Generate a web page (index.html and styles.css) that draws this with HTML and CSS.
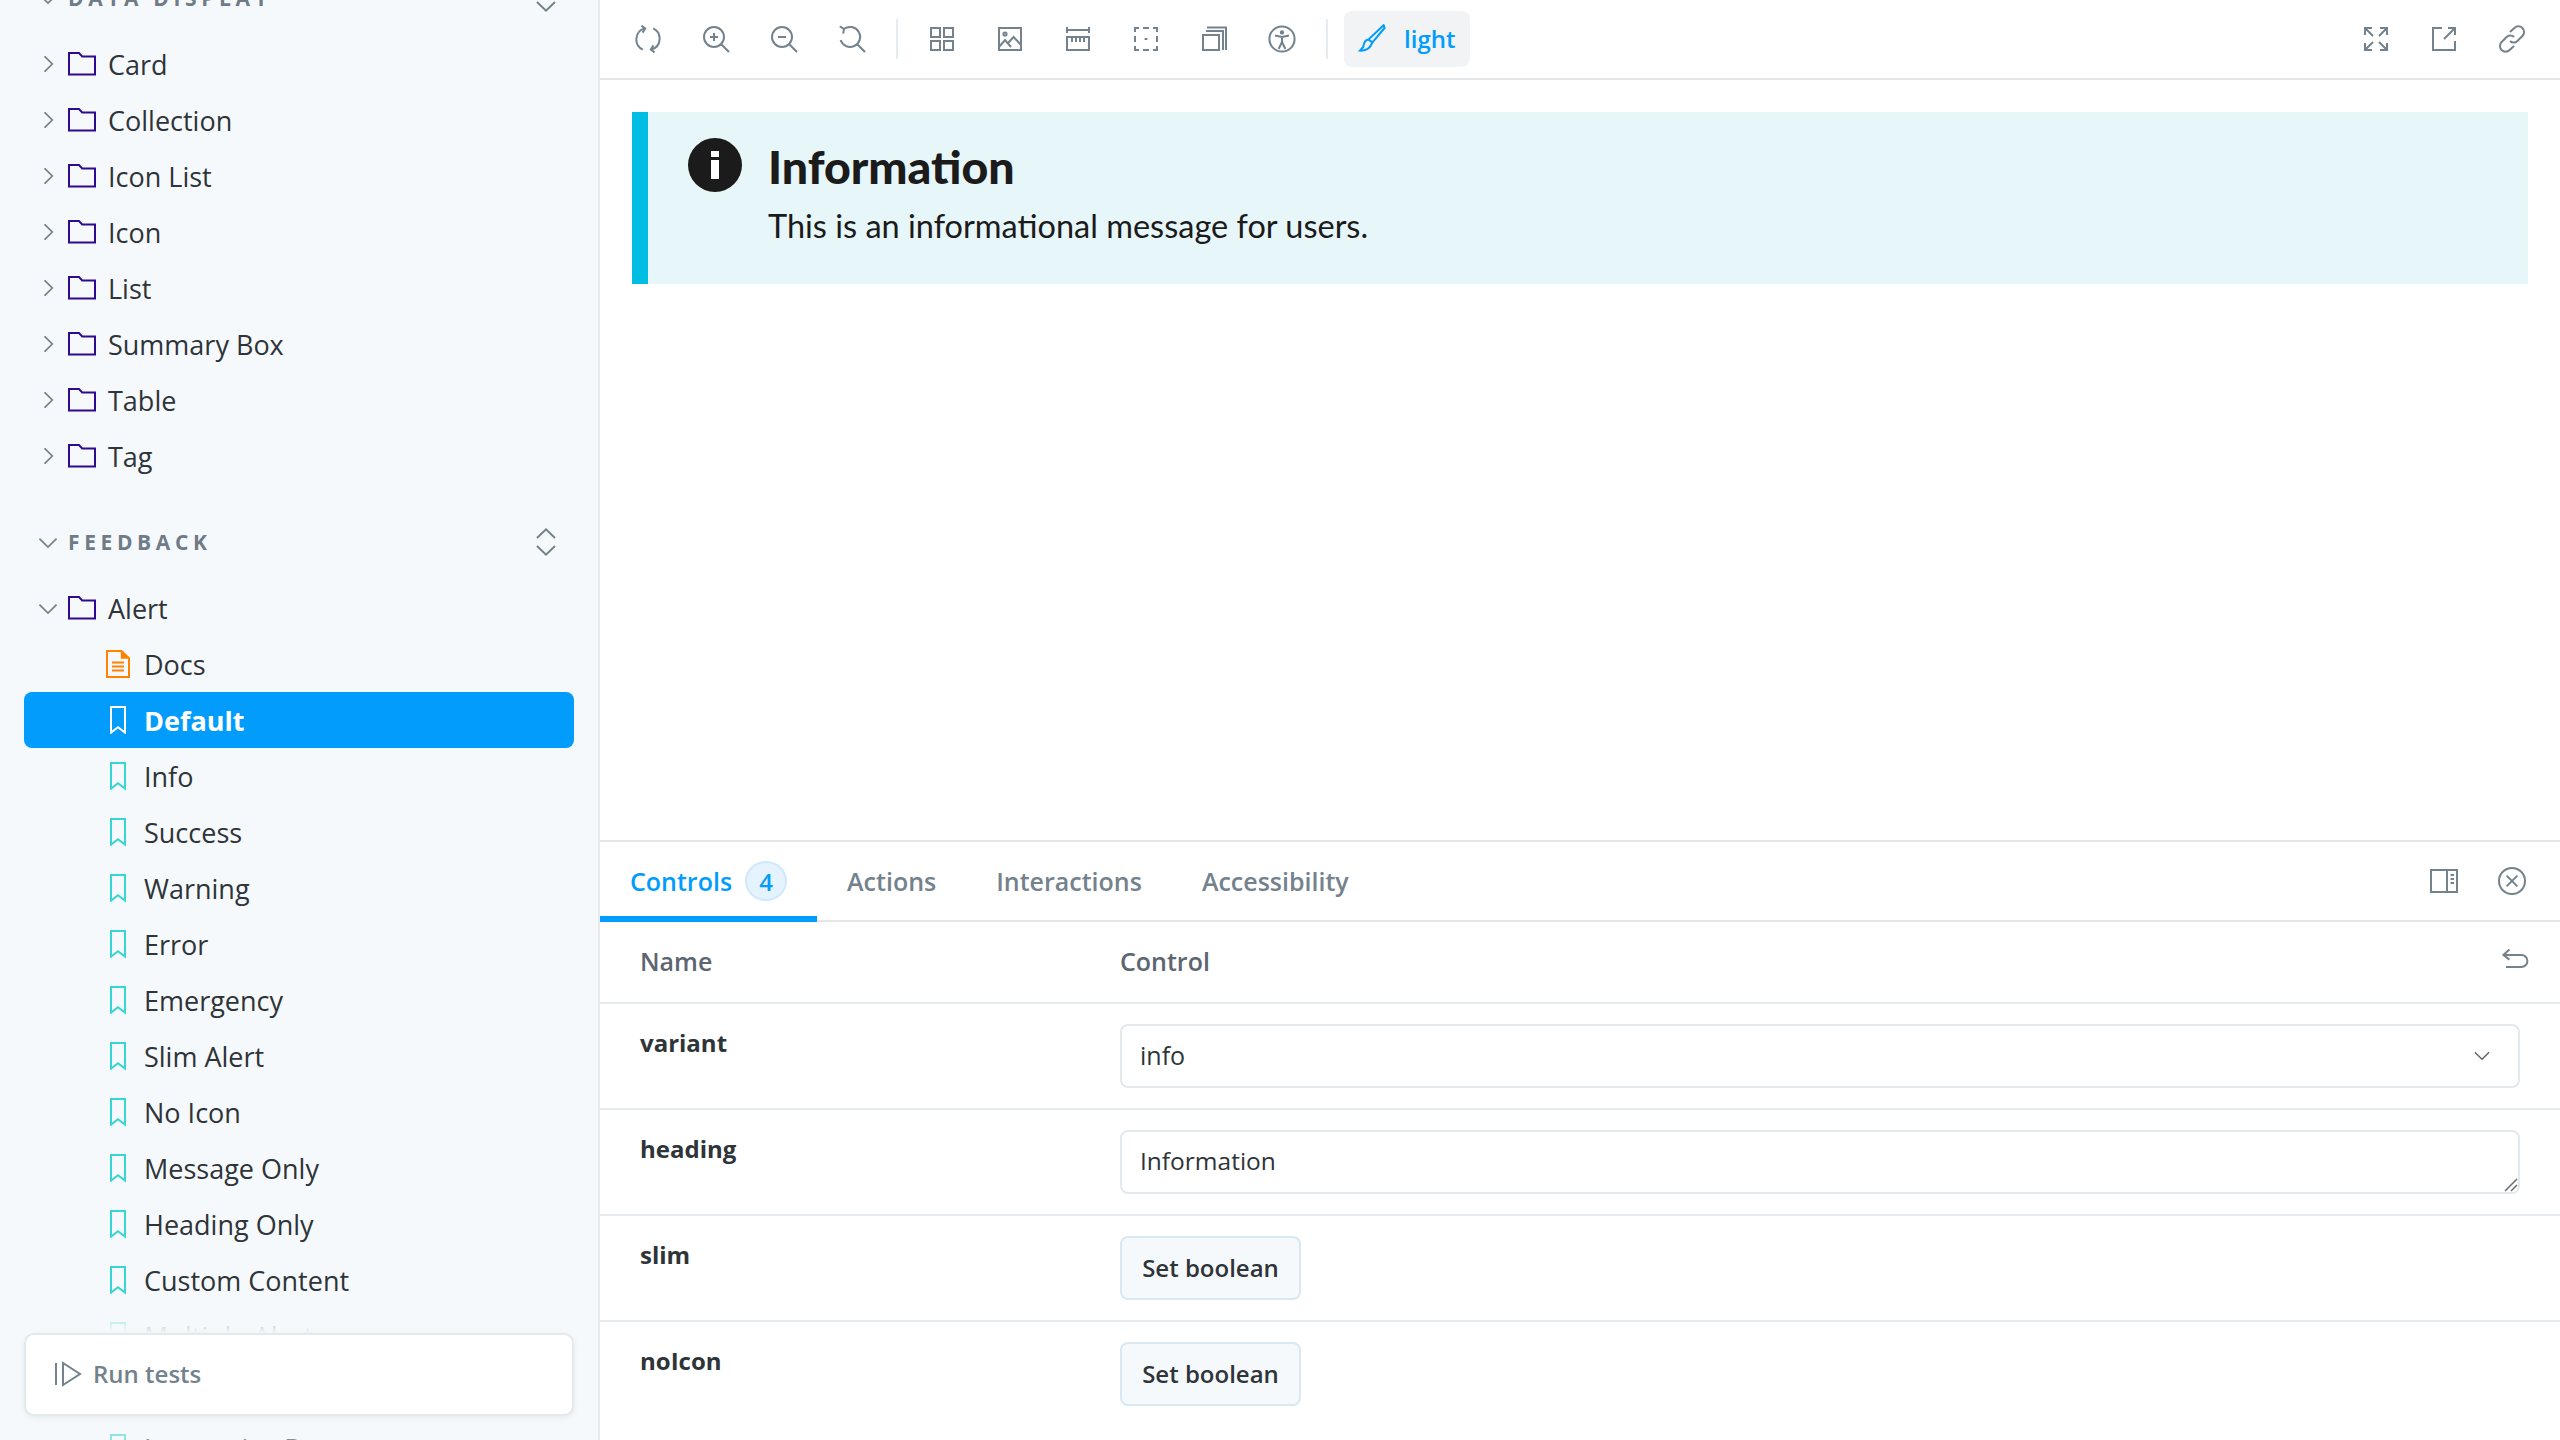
FILE: index.html
```html
<!DOCTYPE html>
<html lang="en">
<head>
    <meta charset="UTF-8">
    <title>Alert - Default</title>
    <link rel="stylesheet" href="styles.css">
</head>
<body>

    <!-- Shared icons, all on a 14 unit grid -->
    <svg class="sprite" xmlns="http://www.w3.org/2000/svg">
        <symbol id="i-right" viewBox="0 0 14 14"><path d="M5 2.500 9.500 7 5 11.500"/></symbol>
        <symbol id="i-down" viewBox="0 0 14 14"><path d="M2 5l5 5 5-5"/></symbol>
        <symbol id="i-updown" viewBox="0 0 14 14"><path d="M2.500 5 7 .7 11.500 5M2.500 9 7 13.300 11.500 9"/></symbol>
        <symbol id="i-folder" viewBox="0 0 14 14"><path d="M.5 1.500h5l1.600 1.700h6.400v9H.5z"/></symbol>
        <symbol id="i-bookmark" viewBox="0 0 14 14"><path d="M3.500.5h7v12.800L7 10.600l-3.500 2.700z"/></symbol>
        <symbol id="i-doc" viewBox="0 0 14 14"><path d="M1.500.5h7.200l3.800 3.600v9.400h-11zM4 6.200h6M4 8.200h6M4 10.200h6"/><path class="solid" d="M8.400.5l4.100 3.900H8.400z"/></symbol>
        <symbol id="i-play" viewBox="0 0 14 14"><path d="M1 1.500v11M4.500 1.500v11l8.500-5.500z"/></symbol>
        <symbol id="i-sync" viewBox="0 0 14 14"><path d="M5.300 1.700A5.700 5.700 0 0 0 4.400 12.300M8.700 12.300A5.700 5.700 0 0 0 9.600 1.700M3.700.3l1.900 1.400-1.300 2.100M10.300 13.700l-1.900-1.400 1.300-2.100"/></symbol>
        <symbol id="i-zoomin" viewBox="0 0 14 14"><circle cx="6" cy="6" r="5"/><path d="M9.600 9.600l3.900 3.900M6 4v4M4 6h4"/></symbol>
        <symbol id="i-zoomout" viewBox="0 0 14 14"><circle cx="6" cy="6" r="5"/><path d="M9.600 9.600l3.900 3.900M4 6h4"/></symbol>
        <symbol id="i-zoomreset" viewBox="0 0 14 14"><path d="M3 2A5 5 0 1 1 1.300 7.500M9.600 9.600l3.900 3.900M.9.7 3 2 2.600 4.300"/></symbol>
        <symbol id="i-grid" viewBox="0 0 14 14"><path d="M1.500 1.500h4.500v4.500H1.500zM8 1.500h4.500v4.500H8zM1.500 8h4.500v4.500H1.500zM8 8h4.500v4.500H8z"/></symbol>
        <symbol id="i-photo" viewBox="0 0 14 14"><path d="M1.500 1.500h11v11h-11zM1.500 11l3-3.500 3 3.500M6 9l2.800-3 3.700 4"/><circle cx="4.500" cy="4.500" r=".8"/></symbol>
        <symbol id="i-ruler" viewBox="0 0 14 14"><path d="M1.500 1v3M12.500 1v3M1.500 2.500h11M1.500 6h11v6.500h-11zM4 6v2.500M6 6v2.500M8 6v2.500M10 6v2.500"/></symbol>
        <symbol id="i-outline" viewBox="0 0 14 14"><path d="M1.500 3.500v-2h2M5.500 1.500h3M10.500 1.500h2v2M12.500 5.500v3M12.500 10.500v2h-2M8.500 12.500h-3M3.500 12.500h-2v-2M1.500 8.500v-3"/><path d="M6.300 7h1.400"/></symbol>
        <symbol id="i-stack" viewBox="0 0 14 14"><path d="M1.500 5h8v7.500h-8zM3 3h8.500v9.500M3.500 1.300h9.500v11.200"/></symbol>
        <symbol id="i-a11y" viewBox="0 0 14 14"><circle cx="7" cy="7" r="6.300"/><circle cx="7" cy="3.700" r=".6"/><path d="M3.500 5.300 7 6l3.500-.7M7 6v2.500l-1.700 3.500M7 8.500l1.700 3.500"/></symbol>
        <symbol id="i-brush" viewBox="0 0 14 14"><path d="M12.800.6 13.300 2 7.200 9.200 5.200 7.800zM5.200 7.800C3 8 3 10 2.600 11.500L1 13.300c2.500.2 5-.8 6.200-4.100"/></symbol>
        <symbol id="i-expand" viewBox="0 0 14 14"><path d="M1.500 5V1.500H5M1.500 1.500l4 4M12.500 5V1.500H9M12.500 1.500l-4 4M1.500 9v3.500H5M1.500 12.500l4-4M12.500 9v3.500H9M12.500 12.500l-4-4"/></symbol>
        <symbol id="i-share" viewBox="0 0 14 14"><path d="M6 1.500H1.500v11h11V8M9 1.500h3.500V5M12.500 1.500 7 7"/></symbol>
        <symbol id="i-link" viewBox="0 0 14 14"><path d="M6 3.500 8.200 1.500a2.600 2.600 0 0 1 4 4L9.700 8a2.600 2.600 0 0 1-3.700 0M8 10.500 5.800 12.500a2.600 2.600 0 0 1-4-4L4.300 6A2.600 2.600 0 0 1 8 6"/></symbol>
        <symbol id="i-side" viewBox="0 0 14 14"><path d="M.5 1.500h13v11H.5zM8.500 1.500v11M10.300 4h1.700M10.300 6h1.700M10.300 8h1.700"/></symbol>
        <symbol id="i-close" viewBox="0 0 14 14"><circle cx="7" cy="7" r="6.500"/><path d="M4.300 4.300l5.400 5.400M9.700 4.300l-5.400 5.400"/></symbol>
        <symbol id="i-undo" viewBox="0 0 14 14"><path d="M4.200 1.200 1.200 4l3 2.300M1.200 4h9a2.900 2.900 0 0 1 0 6H2.500"/></symbol>
    </svg>

    <div class="app">
        <aside class="sidebar">
            <div class="tree">
                <div class="section">
                    <svg class="chev"><use href="#i-down"/></svg>
                    <span class="section-name">DATA DISPLAY</span>
                    <svg class="updown"><use href="#i-updown"/></svg>
                </div>
                <div class="row"><svg class="chev"><use href="#i-right"/></svg><svg class="ic folder"><use href="#i-folder"/></svg>Card</div>
                <div class="row"><svg class="chev"><use href="#i-right"/></svg><svg class="ic folder"><use href="#i-folder"/></svg>Collection</div>
                <div class="row"><svg class="chev"><use href="#i-right"/></svg><svg class="ic folder"><use href="#i-folder"/></svg>Icon List</div>
                <div class="row"><svg class="chev"><use href="#i-right"/></svg><svg class="ic folder"><use href="#i-folder"/></svg>Icon</div>
                <div class="row"><svg class="chev"><use href="#i-right"/></svg><svg class="ic folder"><use href="#i-folder"/></svg>List</div>
                <div class="row"><svg class="chev"><use href="#i-right"/></svg><svg class="ic folder"><use href="#i-folder"/></svg>Summary Box</div>
                <div class="row"><svg class="chev"><use href="#i-right"/></svg><svg class="ic folder"><use href="#i-folder"/></svg>Table</div>
                <div class="row"><svg class="chev"><use href="#i-right"/></svg><svg class="ic folder"><use href="#i-folder"/></svg>Tag</div>

                <div class="section section-gap">
                    <svg class="chev"><use href="#i-down"/></svg>
                    <span class="section-name">FEEDBACK</span>
                    <svg class="updown"><use href="#i-updown"/></svg>
                </div>
                <div class="row"><svg class="chev"><use href="#i-down"/></svg><svg class="ic folder"><use href="#i-folder"/></svg>Alert</div>
                <div class="row leaf"><svg class="ic doc"><use href="#i-doc"/></svg>Docs</div>
                <div class="row leaf selected"><svg class="ic story"><use href="#i-bookmark"/></svg>Default</div>
                <div class="row leaf"><svg class="ic story"><use href="#i-bookmark"/></svg>Info</div>
                <div class="row leaf"><svg class="ic story"><use href="#i-bookmark"/></svg>Success</div>
                <div class="row leaf"><svg class="ic story"><use href="#i-bookmark"/></svg>Warning</div>
                <div class="row leaf"><svg class="ic story"><use href="#i-bookmark"/></svg>Error</div>
                <div class="row leaf"><svg class="ic story"><use href="#i-bookmark"/></svg>Emergency</div>
                <div class="row leaf"><svg class="ic story"><use href="#i-bookmark"/></svg>Slim Alert</div>
                <div class="row leaf"><svg class="ic story"><use href="#i-bookmark"/></svg>No Icon</div>
                <div class="row leaf"><svg class="ic story"><use href="#i-bookmark"/></svg>Message Only</div>
                <div class="row leaf"><svg class="ic story"><use href="#i-bookmark"/></svg>Heading Only</div>
                <div class="row leaf"><svg class="ic story"><use href="#i-bookmark"/></svg>Custom Content</div>
                <div class="row leaf"><svg class="ic story"><use href="#i-bookmark"/></svg>Multiple Alerts</div>
                <div class="row leaf"></div>
                <div class="row leaf"><svg class="ic story"><use href="#i-bookmark"/></svg>Interactive Demo</div>
            </div>

            <div class="run-wrap">
                <div class="run-card">
                    <svg class="run-icon"><use href="#i-play"/></svg>
                    <span>Run tests</span>
                </div>
            </div>
        </aside>

        <main class="main">
            <div class="toolbar">
                <div class="tools">
                    <span class="tool"><svg class="tool-icon"><use href="#i-sync"/></svg></span>
                    <span class="tool"><svg class="tool-icon"><use href="#i-zoomin"/></svg></span>
                    <span class="tool"><svg class="tool-icon"><use href="#i-zoomout"/></svg></span>
                    <span class="tool"><svg class="tool-icon"><use href="#i-zoomreset"/></svg></span>
                    <span class="divider"></span>
                    <span class="tool"><svg class="tool-icon"><use href="#i-grid"/></svg></span>
                    <span class="tool"><svg class="tool-icon"><use href="#i-photo"/></svg></span>
                    <span class="tool"><svg class="tool-icon"><use href="#i-ruler"/></svg></span>
                    <span class="tool"><svg class="tool-icon"><use href="#i-outline"/></svg></span>
                    <span class="tool"><svg class="tool-icon"><use href="#i-stack"/></svg></span>
                    <span class="tool"><svg class="tool-icon"><use href="#i-a11y"/></svg></span>
                    <span class="divider"></span>
                    <span class="theme-btn"><svg class="tool-icon"><use href="#i-brush"/></svg>light</span>
                </div>
                <div class="tools">
                    <span class="tool"><svg class="tool-icon"><use href="#i-expand"/></svg></span>
                    <span class="tool"><svg class="tool-icon"><use href="#i-share"/></svg></span>
                    <span class="tool"><svg class="tool-icon"><use href="#i-link"/></svg></span>
                </div>
            </div>

            <div class="canvas">
                <div class="alert">
                    <svg class="alert-icon" viewBox="0 0 54 54">
                        <circle cx="27" cy="27" r="27" fill="#1b1b1b"/>
                        <rect x="23" y="13" width="8" height="6" fill="#fff"/>
                        <rect x="23" y="22" width="8" height="19" fill="#fff"/>
                    </svg>
                    <div>
                        <h4 class="alert-heading">Information</h4>
                        <p class="alert-text">This is an informational message for users.</p>
                    </div>
                </div>
            </div>

            <section class="panel">
                <div class="tabs">
                    <div class="tab-list">
                        <span class="tab active">Controls<span class="badge">4</span></span>
                        <span class="tab">Actions</span>
                        <span class="tab">Interactions</span>
                        <span class="tab">Accessibility</span>
                    </div>
                    <div class="tab-tools">
                        <svg class="tool-icon"><use href="#i-side"/></svg>
                        <svg class="tool-icon"><use href="#i-close"/></svg>
                    </div>
                </div>

                <div class="args-row args-head">
                    <span>Name</span>
                    <span class="head-control">Control<svg class="tool-icon"><use href="#i-undo"/></svg></span>
                </div>
                <div class="args-row">
                    <span class="arg-name">variant</span>
                    <div class="select">info<svg class="select-chev"><use href="#i-down"/></svg></div>
                </div>
                <div class="args-row">
                    <span class="arg-name">heading</span>
                    <div class="text-wrap">
                        <textarea class="text-input" rows="1">Information</textarea>
                        <svg class="resize-grip" viewBox="0 0 14 14"><path d="M1 13 13 1M7 13l6-6"/></svg>
                    </div>
                </div>
                <div class="args-row">
                    <span class="arg-name">slim</span>
                    <div><button class="bool-btn">Set boolean</button></div>
                </div>
                <div class="args-row">
                    <span class="arg-name">noIcon</span>
                    <div><button class="bool-btn">Set boolean</button></div>
                </div>
            </section>
        </main>
    </div>

</body>
</html>
```

FILE: styles.css
```css
/* Global Styles */
* {
    box-sizing: border-box;
}

html, body {
    height: 100%;
}

body {
    margin: 0;
    overflow: hidden;
    font-family: "Open Sans", "Noto Sans", sans-serif;
    color: #2e3438;
    background-color: #fff;
}

.sprite {
    display: none;
}

svg {
    fill: none;
    stroke: currentColor;
    stroke-width: 1;
    flex-shrink: 0;
}

.solid {
    fill: currentColor;
    stroke: none;
}

.app {
    display: grid;
    grid-template-columns: 600px 1fr;
    height: 1440px;
}

/* Sidebar */
.sidebar {
    position: relative;
    overflow: hidden;
    background-color: #f6f9fc;
    border-right: 2px solid #e6ebef;
    padding: 0 24px 0 24px;
}

.tree {
    margin-top: -30px;
    width: 550px;
}

.section {
    display: flex;
    align-items: center;
    gap: 8px;
    height: 56px;
    margin-bottom: 10px;
    padding-left: 12px;
    color: #6f7c87;
}

.section-gap {
    margin-top: 30px;
}

.section-name {
    flex: 1;
    font-size: 21px;
    font-weight: 700;
    letter-spacing: 0.22em;
}

.chev {
    width: 24px;
    height: 24px;
    color: #73828c;
}

.updown {
    width: 28px;
    height: 28px;
    margin-right: 14px;
    color: #73828c;
}

.row {
    display: flex;
    align-items: center;
    gap: 12px;
    height: 56px;
    padding-left: 12px;
    font-size: 27px;
    white-space: nowrap;
}

.row .chev {
    margin-right: -4px;
}

.row.leaf {
    gap: 12px;
    padding-left: 80px;
}

.row.selected {
    background-color: #029cfd;
    border-radius: 8px;
    color: #fff;
    font-weight: 700;
}

.ic {
    width: 28px;
    height: 28px;
}

.folder {
    color: #2e0a8e;
}

.doc {
    color: #ff8300;
}

.story {
    color: #37d5d3;
}

.selected .story {
    color: #fff;
}

/* Fades out the tree around the test card */
.run-wrap {
    position: absolute;
    left: 0;
    right: 0;
    bottom: 0;
    padding: 40px 24px 24px;
    background: linear-gradient(to bottom, rgba(246, 249, 252, 0) 0, #f6f9fc 40px, #f6f9fc 118px, rgba(246, 249, 252, 0.45) 122px);
}

.run-card {
    display: flex;
    align-items: center;
    gap: 11px;
    height: 83px;
    padding: 0 0 2px 28px;
    background-color: #fff;
    border: 2px solid #e3e9ec;
    border-radius: 10px;
    box-shadow: 0 2px 6px rgba(0, 0, 0, 0.06);
    color: #73828c;
    font-size: 24px;
    font-weight: 600;
}

.run-icon {
    width: 28px;
    height: 28px;
}

/* Main column */
.main {
    display: flex;
    flex-direction: column;
    min-width: 0;
}

.toolbar {
    display: flex;
    justify-content: space-between;
    align-items: center;
    height: 80px;
    padding: 0 14px;
    border-bottom: 2px solid #e3e7ea;
}

.tools {
    display: flex;
    align-items: center;
}

.tool {
    display: flex;
    justify-content: center;
    width: 68px;
}

.tool-icon {
    width: 28px;
    height: 28px;
    color: #73828c;
}

.divider {
    width: 2px;
    height: 40px;
    margin: 0 10px;
    background-color: #e6ebef;
}

.theme-btn {
    display: flex;
    align-items: center;
    gap: 18px;
    width: 126px;
    height: 56px;
    margin-left: 6px;
    padding: 0 14px 2px;
    border-radius: 8px;
    background-color: #f1f3f5;
    color: #029cfd;
    font-size: 24px;
    font-weight: 600;
}

.theme-btn .tool-icon {
    color: #029cfd;
}

.canvas {
    height: 760px;
    padding: 32px;
}

.alert {
    display: flex;
    gap: 26px;
    height: 172px;
    padding: 24px 0 32px 40px;
    background-color: #e7f6f8;
    border-left: 16px solid #00bde3;
    font-family: Lato, "Liberation Sans", sans-serif;
    color: #1b1b1b;
}

.alert-icon {
    width: 54px;
    height: 54px;
    margin-top: 2px;
    stroke: none;
}

.alert-heading {
    margin: 0;
    font-size: 46.500px;
    line-height: 60px;
    font-weight: 900;
}

.alert-text {
    margin: 3px 0 0;
    font-size: 32.500px;
    line-height: 54px;
}

/* Addon panel */
.panel {
    flex: 1;
    border-top: 2px solid #e3e7ea;
    font-size: 25px;
}

.tabs {
    display: flex;
    justify-content: space-between;
    align-items: flex-start;
    height: 80px;
    border-bottom: 2px solid #e3e7ea;
}

.tab-list {
    display: flex;
}

.tab {
    display: flex;
    align-items: center;
    height: 80px;
    padding: 4px 30px 0;
    border-bottom: 6px solid transparent;
    color: #73828c;
    font-weight: 600;
}

.tab.active {
    color: #029cfd;
    border-bottom-color: #029cfd;
}

.badge {
    display: flex;
    justify-content: center;
    align-items: center;
    width: 42px;
    height: 40px;
    margin-left: 13px;
    border: 2px solid #cfe9fb;
    border-radius: 50%;
    background-color: #e4f3fe;
    font-size: 24px;
}

.tab-tools {
    display: flex;
    gap: 40px;
    align-items: center;
    height: 78px;
    padding-right: 34px;
}

.args-row {
    display: grid;
    grid-template-columns: 480px 1fr;
    padding: 20px 40px;
    border-bottom: 2px solid #e6ebef;
}

.args-row:last-child {
    border-bottom: none;
}

.args-row > span {
    line-height: 38px;
}

.args-head {
    color: #5c6570;
    font-weight: 600;
    padding-bottom: 22px;
}

.head-control {
    display: flex;
    justify-content: space-between;
    align-items: center;
}

.head-control .tool-icon {
    margin-right: -9px;
}

.arg-name {
    font-size: 24px;
    font-weight: 700;
}

.select {
    display: flex;
    justify-content: space-between;
    align-items: center;
    height: 64px;
    padding: 0 26px 2px 18px;
    border: 2px solid #e3e9ec;
    border-radius: 8px;
}

.select-chev {
    width: 20px;
    height: 20px;
    color: #5c6570;
}

.text-wrap {
    position: relative;
}

.text-input {
    display: block;
    width: 100%;
    height: 64px;
    padding: 14px 18px;
    border: 2px solid #e3e9ec;
    border-radius: 8px;
    outline: none;
    resize: none;
    font-family: inherit;
    font-size: 24.500px;
    line-height: 30px;
    color: #2e3438;
}

.resize-grip {
    position: absolute;
    right: 2px;
    bottom: 2px;
    width: 14px;
    height: 14px;
    color: #6b6b6b;
    stroke-width: 1.500;
}

.bool-btn {
    height: 64px;
    width: 181px;
    padding: 0 0 2px;
    border: 2px solid #d9e8f2;
    border-radius: 8px;
    background-color: #f6f9fc;
    font-family: inherit;
    font-size: 24px;
    font-weight: 600;
    color: #2e3438;
}
```
